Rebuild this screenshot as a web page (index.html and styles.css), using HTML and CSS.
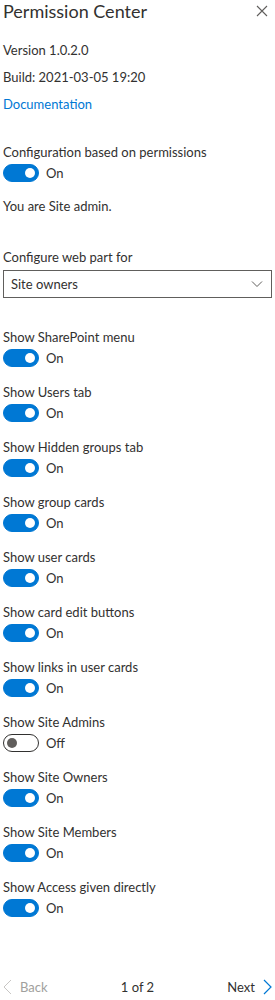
FILE: index.html
```html
<html>
<head>
<title>Permission Center</title>
<meta http-equiv="Content-Type" content="text/html; charset=UTF-8">
<link rel="stylesheet" href="styles.css">
</head>
<body>
  <div id="panel">
    <div class="header">
      <h1>Permission Center</h1>
      <span class="close">
        <svg width="12" height="12" viewBox="0 0 12 12"><path d="M1 1L11 11M11 1L1 11" stroke="#605e5c" stroke-width="1.1" fill="none"/></svg>
      </span>
    </div>

    <p class="info">Version 1.0.2.0</p>
    <p class="info">Build: 2021-03-05 19:20</p>
    <p class="info"><a href="#">Documentation</a></p>

    <div class="setting first">
      <div class="label">Configuration based on permissions</div>
      <div class="toggle on"><span class="pill"><span class="thumb"></span></span>On</div>
    </div>
    <p class="admin">You are Site admin.</p>

    <div class="configure">
      <div class="label">Configure web part for</div>
      <div class="dropdown">
        <span>Site owners</span>
        <svg width="12" height="8" viewBox="0 0 12 8"><path d="M1 1.5L6 6.5L11 1.5" stroke="#605e5c" stroke-width="1" fill="none"/></svg>
      </div>
    </div>

    <div class="settings">
      <div class="setting">
        <div class="label">Show SharePoint menu</div>
        <div class="toggle on"><span class="pill"><span class="thumb"></span></span>On</div>
      </div>
      <div class="setting">
        <div class="label">Show Users tab</div>
        <div class="toggle on"><span class="pill"><span class="thumb"></span></span>On</div>
      </div>
      <div class="setting">
        <div class="label">Show Hidden groups tab</div>
        <div class="toggle on"><span class="pill"><span class="thumb"></span></span>On</div>
      </div>
      <div class="setting">
        <div class="label">Show group cards</div>
        <div class="toggle on"><span class="pill"><span class="thumb"></span></span>On</div>
      </div>
      <div class="setting">
        <div class="label">Show user cards</div>
        <div class="toggle on"><span class="pill"><span class="thumb"></span></span>On</div>
      </div>
      <div class="setting">
        <div class="label">Show card edit buttons</div>
        <div class="toggle on"><span class="pill"><span class="thumb"></span></span>On</div>
      </div>
      <div class="setting">
        <div class="label">Show links in user cards</div>
        <div class="toggle on"><span class="pill"><span class="thumb"></span></span>On</div>
      </div>
      <div class="setting">
        <div class="label">Show Site Admins</div>
        <div class="toggle off"><span class="pill"><span class="thumb"></span></span>Off</div>
      </div>
      <div class="setting">
        <div class="label">Show Site Owners</div>
        <div class="toggle on"><span class="pill"><span class="thumb"></span></span>On</div>
      </div>
      <div class="setting">
        <div class="label">Show Site Members</div>
        <div class="toggle on"><span class="pill"><span class="thumb"></span></span>On</div>
      </div>
      <div class="setting">
        <div class="label">Show Access given directly</div>
        <div class="toggle on"><span class="pill"><span class="thumb"></span></span>On</div>
      </div>
    </div>

    <div class="pager">
      <span class="back">
        <svg width="9" height="16" viewBox="0 0 9 16"><path d="M8 1L1 8L8 15" stroke="#c8c6c4" stroke-width="1" fill="none"/></svg>
        Back
      </span>
      <span class="count">1 of 2</span>
      <span class="next">
        Next
        <svg width="9" height="16" viewBox="0 0 9 16"><path d="M1 1L8 8L1 15" stroke="#0078d4" stroke-width="1.2" fill="none"/></svg>
      </span>
    </div>
  </div>
</body>
</html>
```

FILE: styles.css
```css
body {
  margin: 0;
  font-family: Lato, sans-serif;
  font-size: 13px;
  color: #323130;
}
#panel {
  padding: 0 3px;
}
.header {
  display: flex;
  justify-content: space-between;
  align-items: center;
  height: 22px;
}
h1 {
  font-size: 18px;
  font-weight: normal;
  margin: 0;
  line-height: 22px;
}
.close {
  display: flex;
  margin-right: 4px;
}
.info {
  margin: 0;
  line-height: 27px;
}
.info:first-of-type { margin-top: 15px; }
a {
  color: #0078d4;
  text-decoration: none;
}
.label {
  line-height: 20px;
}
.setting {
  margin-bottom: 14px;
}
.setting.first {
  margin-top: 24px;
  margin-bottom: 0;
}
.toggle {
  display: flex;
  align-items: center;
  height: 20px;
  margin-top: 1px;
  gap: 7px;
}
.pill {
  box-sizing: border-box;
  width: 36px;
  height: 18px;
  border-radius: 9px;
  border: 1px solid #323130;
  display: flex;
  align-items: center;
  padding: 0 3px;
}
.thumb {
  width: 10px;
  height: 10px;
  border-radius: 50%;
  background: #605e5c;
}
.on .pill {
  background: #0078d4;
  border-color: #0078d4;
  justify-content: flex-end;
}
.on .thumb { background: #fff; }
.admin {
  margin: 13px 0 0 0;
  line-height: 20px;
}
.configure {
  margin-top: 31px;
}
.dropdown {
  margin-top: 3px;
  height: 28px;
  box-sizing: border-box;
  border: 1px solid #605e5c;
  display: flex;
  justify-content: space-between;
  align-items: center;
  padding: 0 8px 0 7px;
}
.settings {
  margin-top: 29px;
}
.pager {
  margin-top: 57px;
  display: flex;
  justify-content: space-between;
  align-items: center;
  height: 24px;
}
.pager span {
  display: flex;
  align-items: center;
  gap: 8px;
}
.back { color: #a19f9d; }
```
